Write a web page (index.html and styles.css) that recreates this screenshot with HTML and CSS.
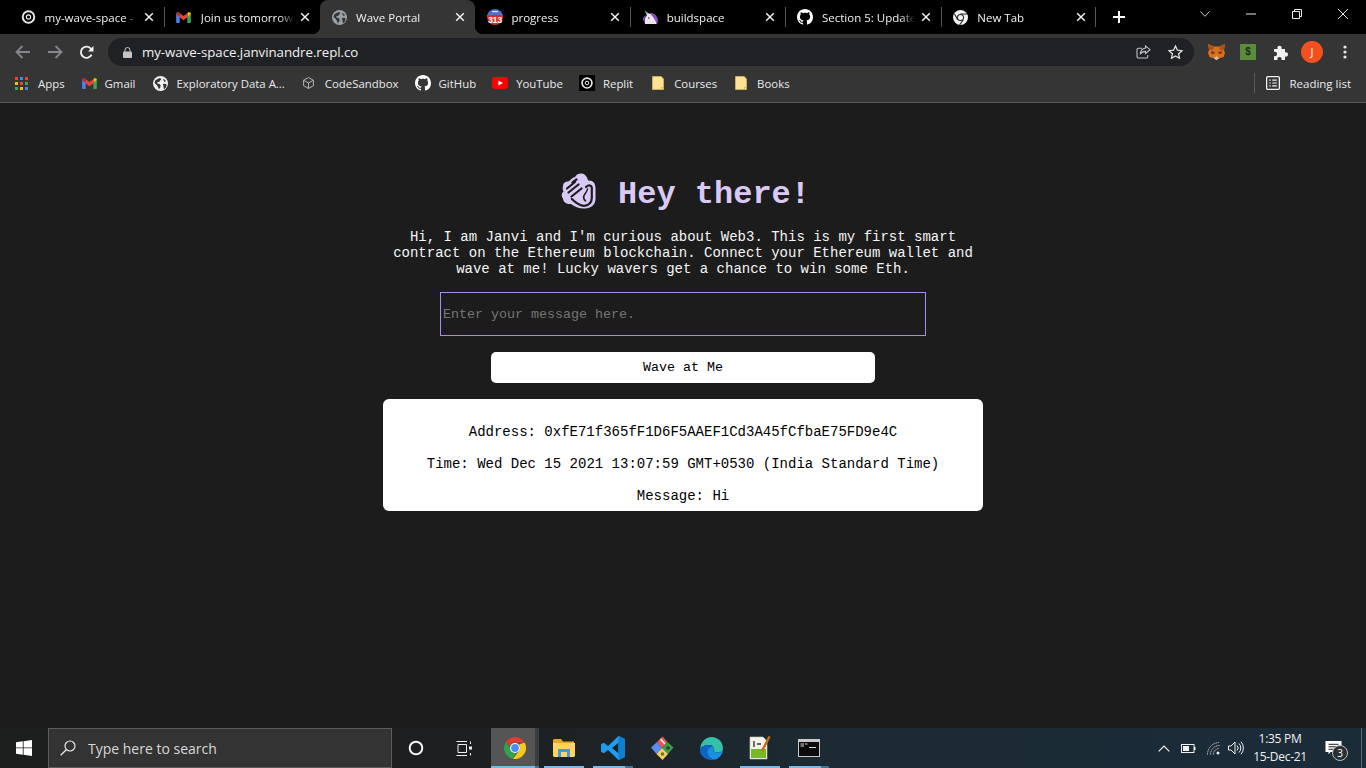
FILE: index.html
```html
<!DOCTYPE html>
<html lang="en">
<head>
<meta charset="utf-8">
<title>Wave Portal</title>
<link rel="stylesheet" href="styles.css">
</head>
<body>
<svg class="defs" width="0" height="0" aria-hidden="true">
  <defs>
    <symbol id="i-replit" viewBox="0 0 16 16">
      <circle cx="8" cy="8" r="6.6" fill="none" stroke="#e8e8e8" stroke-width="2.2"/>
      <path d="M4.6 8.6A3.6 3.6 0 0 1 11 6" fill="none" stroke="#111" stroke-width="1.3"/>
      <circle cx="8" cy="8" r="2.4" fill="none" stroke="#e8e8e8" stroke-width="1.3"/>
      <path d="M12 9.5A4.5 4.5 0 0 1 6 12.4" fill="none" stroke="#111" stroke-width="1"/>
    </symbol>
    <symbol id="i-gmail" viewBox="0 0 16 12">
      <path d="M1 12V2.5L8 7.6 15 2.5V12h-2.6V5.8L8 9 3.6 5.8V12z" fill="#e8453c"/>
      <path d="M0 2.2C0 .6 1.7-.4 3 .5L3.6 1V12H1.1C.5 12 0 11.5 0 10.9z" fill="#4285f4"/>
      <path d="M16 2.2C16 .6 14.3-.4 13 .5L12.4 1V12h2.5c.6 0 1.1-.5 1.1-1.1z" fill="#34a853"/>
      <path d="M12.4 1 13 .5C14.3-.4 16 .6 16 2.2L12.4 5z" fill="#fbbc04"/>
      <path d="M3.6 1 8 4.3 12.4 1v4L8 8.2 3.6 5z" fill="#ea4335"/>
      <path d="M0 2.2C0 .6 1.7-.4 3 .5L3.6 1V5L0 2.4z" fill="#c5221f"/>
    </symbol>
    <symbol id="i-globe" viewBox="0 0 16 16">
      <circle cx="8" cy="8" r="8" fill="currentColor"/>
      <path d="M2.5 4.5 5 3.2 7.4 2 9 3.2 7.6 4.8 6.6 6.3 4.6 6.4 5 8.3 7 8.6 8.2 10 7.6 12.4 6.2 14.2 5.2 11.5 3.8 9.4 1.6 7.4zM10.6 8.6l2.6-.4 1.4 1-1 3.4-2 1.6-.4-2.8zM10.5 3l2.5 1.2.8 1.6-1.8.2z" fill="var(--globe-land, #333)"/>
    </symbol>
    <symbol id="i-github" viewBox="0 0 16 16">
      <path fill="#fff" d="M8 0C3.58 0 0 3.58 0 8c0 3.54 2.29 6.53 5.47 7.59.4.07.55-.17.55-.38 0-.19-.01-.82-.01-1.49-2.01.37-2.53-.49-2.69-.94-.09-.23-.48-.94-.82-1.13-.28-.15-.68-.52-.01-.53.63-.01 1.08.58 1.23.82.72 1.21 1.87.87 2.33.66.07-.52.28-.87.51-1.07-1.78-.2-3.64-.89-3.64-3.95 0-.87.31-1.59.82-2.15-.08-.2-.36-1.02.08-2.12 0 0 .67-.21 2.2.82.64-.18 1.32-.27 2-.27.68 0 1.36.09 2 .27 1.53-1.04 2.2-.82 2.2-.82.44 1.1.16 1.92.08 2.12.51.56.82 1.27.82 2.15 0 3.07-1.87 3.75-3.65 3.95.29.25.54.73.54 1.48 0 1.07-.01 1.93-.01 2.2 0 .21.15.46.55.38A8.013 8.013 0 0016 8c0-4.42-3.58-8-8-8z"/>
    </symbol>
    <symbol id="i-x" viewBox="0 0 10 10">
      <path d="M1.2 1.2 8.8 8.8M8.8 1.2 1.2 8.8" stroke="#f1f1f1" stroke-width="1.5" fill="none"/>
    </symbol>
    <symbol id="i-folder" viewBox="0 0 12 14">
      <path d="M.5.5H9.2L11.5 3V13.5H.5z" fill="#fde293"/>
      <path d="M9 13.5V11h2.5z" fill="#e0b93f"/>
      <path d="M.5.5H9.2L11.5 3V13.5H.5z" fill="none" stroke="#e8c760" stroke-width=".6"/>
    </symbol>
    <symbol id="i-chrome" viewBox="0 0 16 16">
      <circle cx="8" cy="8" r="8" fill="#f1f1f1"/>
      <circle cx="8" cy="8" r="3.8" fill="#222"/>
      <circle cx="8" cy="8" r="2.7" fill="#f1f1f1"/>
      <path d="M8 4.2H15.2M5 10.5 1.6 4.2M10.8 10.5 7 16" stroke="#222" stroke-width="1.1" fill="none"/>
    </symbol>
  </defs>
</svg>

<header class="browser">
  <div class="tabstrip">
    <div class="tab">
      <svg class="tab-ico" width="14" height="14"><use href="#i-replit"/></svg>
      <span class="tab-title">my-wave-space - </span>
      <svg class="tab-x" width="10" height="10"><use href="#i-x"/></svg>
    </div>
    <div class="tab sep">
      <svg class="tab-ico" width="15" height="11"><use href="#i-gmail"/></svg>
      <span class="tab-title">Join us tomorrow</span>
      <svg class="tab-x" width="10" height="10"><use href="#i-x"/></svg>
    </div>
    <div class="tab active">
      <svg class="tab-ico globe-tab" width="15" height="15"><use href="#i-globe"/></svg>
      <span class="tab-title">Wave Portal</span>
      <svg class="tab-x" width="10" height="10"><use href="#i-x"/></svg>
    </div>
    <div class="tab">
      <svg class="tab-ico ico-16" width="16" height="16" viewBox="0 0 16 16">
        <path d="M0 8a8 8 0 0 1 16 0z" fill="#4a6fd8"/>
        <path d="M0 6h16V8a8 8 0 0 1-16 0z" fill="#e02b24"/>
        <rect x="5" y="2" width="6" height="1.200" fill="#dfe6f8"/>
      </svg>
      <span class="badge-num">313</span>
      <span class="tab-title">progress</span>
      <svg class="tab-x" width="10" height="10"><use href="#i-x"/></svg>
    </div>
    <div class="tab sep">
      <svg class="tab-ico ico-16" width="16" height="15" viewBox="0 0 16 15">
        <path d="M3 14C2 10 3 7 5 5.500L3 .8 7.200 3.800C10.500 3 14 4.500 15 8.500 15.800 11.500 15 13.500 14.500 14z" fill="#f0e2f2"/>
        <path d="M8 3.500C10.500 2.900 14.500 5 15.500 8.500 16.200 11 15.600 13 14.800 14.500 13.800 11 12 7.500 8 3.500zM5 5.200C3 6.500 2 9 2.400 12L1 10C.5 8 2 5.500 5 5.200z" fill="#8a4bc0"/>
        <path d="M3 .8 5.800 3.400 4.600 4.600z" fill="#3fb56f"/>
        <circle cx="6.800" cy="8" r=".8" fill="#333"/>
      </svg>
      <span class="tab-title">buildspace</span>
      <svg class="tab-x" width="10" height="10"><use href="#i-x"/></svg>
    </div>
    <div class="tab sep">
      <svg class="tab-ico ico-16" width="16" height="16"><use href="#i-github"/></svg>
      <span class="tab-title">Section 5: Update</span>
      <svg class="tab-x" width="10" height="10"><use href="#i-x"/></svg>
    </div>
    <div class="tab sep sep-end">
      <svg class="tab-ico" width="15" height="15"><use href="#i-chrome"/></svg>
      <span class="tab-title">New Tab</span>
      <svg class="tab-x" width="10" height="10"><use href="#i-x"/></svg>
    </div>
    <svg class="newtab" width="12" height="12" viewBox="0 0 12 12"><path d="M6 0V12M0 6H12" stroke="#fff" stroke-width="2"/></svg>
    <div class="winctl">
      <svg class="win-btn" width="10" height="6" viewBox="0 0 10 6"><path d="M.5 .5 5 5.300 9.500 .5" stroke="#c8c8c8" fill="none"/></svg>
      <svg class="win-btn" width="10" height="2" viewBox="0 0 10 2"><path d="M0 1H10" stroke="#e8e8e8"/></svg>
      <svg class="win-btn" width="10" height="10" viewBox="0 0 10 10"><path d="M.5 2.500H7.500V9.500H.5zM2.500 2.500V.5H9.500V7.500H7.500" stroke="#e8e8e8" fill="none"/></svg>
      <svg class="win-btn" width="10" height="10" viewBox="0 0 10 10"><path d="M0 0 10 10M10 0 0 10" stroke="#e8e8e8"/></svg>
    </div>
  </div>

  <div class="toolbar">
    <svg class="nav" width="16" height="14" viewBox="0 0 16 14"><path d="M15 7H2M7.500 1 1.500 7l6 6" stroke="#85878a" stroke-width="1.800" fill="none"/></svg>
    <svg class="nav" width="16" height="14" viewBox="0 0 16 14"><path d="M1 7H14M8.500 1l6 6-6 6" stroke="#85878a" stroke-width="1.800" fill="none"/></svg>
    <svg class="nav" width="15" height="15" viewBox="0 0 15 15"><path d="M12.600 9.600A5.600 5.600 0 1 1 11.600 3.400L13 5" stroke="#f1f1f1" stroke-width="1.900" fill="none"/><path d="M14.500 1V6.600H9z" fill="#f1f1f1"/></svg>
    <div class="omnibox">
      <svg class="lock" width="9" height="11" viewBox="0 0 9 11"><path d="M2 5V3a2.500 2.500 0 0 1 5 0v2" stroke="#c4c4c4" fill="none"/><rect y="4.400" width="9" height="6.600" rx="1" fill="#c4c4c4"/></svg>
      <span class="url">my-wave-space.janvinandre.repl.co</span>
      <svg class="omni-ico" width="15" height="14" viewBox="0 0 15 14"><path d="M6 3.200H2.400A1.400 1.400 0 0 0 1 4.600v7A1.400 1.400 0 0 0 2.400 13h8A1.400 1.400 0 0 0 11.800 11.600V10" stroke="#bdc1c6" stroke-width="1.100" fill="none"/><path d="M9.500.9 14 4.700 9.500 8.500V6.400C7 6.400 5.300 7.400 4.200 9.300 4.500 6 6.400 3.500 9.500 3z" stroke="#bdc1c6" stroke-width="1.100" fill="none"/></svg>
      <svg class="omni-ico star" width="15" height="14" viewBox="0 0 15 14"><path d="M7.500 1 9.400 5.200 14 5.700 10.600 8.800 11.500 13.300 7.500 11 3.500 13.300 4.400 8.800 1 5.700 5.600 5.200z" stroke="#e0e0e0" stroke-width="1.300" fill="none"/></svg>
    </div>
    <svg class="ext fox" width="17" height="16" viewBox="0 0 17 16">
      <path d="M0 0 6 2.500H11L17 0 16 6 17 9 15.500 13 11 14.500 8.500 16 6 14.500 1.500 13 0 9 1 6z" fill="#d9701f"/>
      <path d="M3 7 7 8 6 10 3.500 10zM14 7 10 8 11 10 13.500 10z" fill="#763d16"/>
      <path d="M0 0 6 2.500 5 6 1 6zM17 0 11 2.500 12 6 16 6z" fill="#a8531a"/>
      <path d="M6 14.500 8.500 12 11 14.500 8.500 16z" fill="#d7c1b3"/>
      <path d="M7 10.500H10L8.500 12z" fill="#f6851b"/>
    </svg>
    <div class="ext dollar">$</div>
    <svg class="ext puzzle" width="15" height="15" viewBox="0 0 15 15"><path d="M1 4H4.500C4 2 5 .8 6.500.8S9 2 8.500 4H12V7.500C14 7 15 8 15 9.500S14 12 12 11.500V15H8.500C9 13 8 12 6.500 12S4 13 4.500 15H1V11C3 11.500 4 10.500 4 9S3 6.500 1 7z" fill="#f1f1f1"/></svg>
    <div class="avatar">J</div>
    <svg class="kebab" width="4" height="14" viewBox="0 0 4 14"><circle cx="2" cy="2" r="1.600" fill="#e8e8e8"/><circle cx="2" cy="7" r="1.600" fill="#e8e8e8"/><circle cx="2" cy="12" r="1.600" fill="#e8e8e8"/></svg>
  </div>

  <nav class="bookmarks">
    <span class="bm bm-apps">
      <svg width="13" height="13" viewBox="0 0 13 13">
        <rect width="3" height="3" fill="#ea4335"/><rect x="5" width="3" height="3" fill="#4285f4"/><rect x="10" width="3" height="3" fill="#ea4335"/>
        <rect y="5" width="3" height="3" fill="#fbbc04"/><rect x="5" y="5" width="3" height="3" fill="#ea4335"/><rect x="10" y="5" width="3" height="3" fill="#34a853"/>
        <rect y="10" width="3" height="3" fill="#34a853"/><rect x="5" y="10" width="3" height="3" fill="#fbbc04"/><rect x="10" y="10" width="3" height="3" fill="#4285f4"/>
      </svg>Apps</span>
    <span class="bm"><svg width="15" height="11"><use href="#i-gmail"/></svg>Gmail</span>
    <span class="bm globe-bm"><svg width="15" height="15"><use href="#i-globe"/></svg>Exploratory Data A...</span>
    <span class="bm bm-csb"><svg width="11" height="12" viewBox="0 0 10 11"><path d="M5 .5 9.500 3V8L5 10.500.5 8V3zM.5 3 5 5.500 9.500 3M5 5.500V10.500" stroke="#b9b9b9" fill="none" stroke-width=".9"/></svg>CodeSandbox</span>
    <span class="bm"><svg width="16" height="16"><use href="#i-github"/></svg>GitHub</span>
    <span class="bm"><svg width="16" height="12" viewBox="0 0 16 12"><rect width="16" height="12" rx="3" fill="#f00"/><path d="M6.400 3.400 11 6 6.400 8.600z" fill="#fff"/></svg>YouTube</span>
    <span class="bm bm-replit"><svg width="16" height="16" viewBox="0 0 16 16"><rect width="16" height="16" fill="#000"/><use href="#i-replit" x="2" y="2" width="12" height="12"/></svg>Replit</span>
    <span class="bm folder"><svg width="12" height="14"><use href="#i-folder"/></svg>Courses</span>
    <span class="bm folder"><svg width="12" height="14"><use href="#i-folder"/></svg>Books</span>
    <span class="reading">
      <svg width="14" height="14" viewBox="0 0 13 13"><rect x=".6" y=".6" width="11.800" height="11.800" rx="1" stroke="#f1f1f1" stroke-width="1.200" fill="none"/><path d="M3 3.800H4.400M5.800 3.800H10M3 6.500H4.400M5.800 6.500H10M3 9.200H4.400M5.800 9.200H10" stroke="#f1f1f1" stroke-width="1.100"/></svg>
      Reading list</span>
  </nav>
</header>

<main class="page">
  <section class="portal">
    <h1 class="title">
      <svg class="wave" width="36" height="37" viewBox="0 0 36 37">
        <path d="M3 14C3 11 5 9.500 8 9.500 10 9 12 5.500 15 5 17 1 23 .5 25.500 3.500 27 5 27.500 6.500 28 8.500 33 8 35.500 11 35.500 16V27C35.500 33 30 37 24 36.500 19 36.500 14 34.500 11 32 7 32.500 3 30 3 26.500 1 24 1.500 21 3.500 19.500 2.500 17.500 2.500 15.500 3 14Z" fill="#d9c9f5"/>
        <path d="M7 16.500 15 10M8.500 20.500 18.500 12.500M11.500 24.500 21.500 16.500M12.500 10.500 16.500 7.500" stroke="#1c1c1c" stroke-width="2.200" stroke-linecap="round" fill="none"/>
        <path d="M26 15C29 12.500 31.800 13 31.800 16.500V26C31.800 30.500 28.500 33.800 24 33.800 19.500 33.800 15.500 30.500 11.800 27" stroke="#1c1c1c" stroke-width="2.200" fill="none" stroke-linecap="round"/>
        <path d="M27.500 17C27 20 25 21.500 24 23.500 23.200 25.500 23.800 27.500 25.500 29" stroke="#1c1c1c" stroke-width="1.500" fill="none" stroke-linecap="round"/>
      </svg>
      <span>Hey there!</span>
    </h1>
    <p class="intro">Hi, I am Janvi and I'm curious about Web3. This is my first smart contract on the Ethereum blockchain. Connect your Ethereum wallet and wave at me! Lucky wavers get a chance to win some Eth.</p>
    <input class="msg" type="text" placeholder="Enter your message here.">
    <button class="wave-btn" type="button">Wave at Me</button>
    <article class="card">
      <p>Address: 0xfE71f365fF1D6F5AAEF1Cd3A45fCfbaE75FD9e4C</p>
      <p>Time: Wed Dec 15 2021 13:07:59 GMT+0530 (India Standard Time)</p>
      <p>Message: Hi</p>
    </article>
  </section>
</main>

<footer class="taskbar">
  <svg class="start" width="16" height="16" viewBox="0 0 16 16"><path d="M0 2.300 6.800 1.300V7.500H0zM7.600 1.200 16 0V7.500H7.600zM0 8.300H6.800V14.700L0 13.700zM7.600 8.300H16V16L7.600 14.800z" fill="#fff"/></svg>
  <div class="search">
    <svg width="16" height="16" viewBox="0 0 16 16"><circle cx="10" cy="6" r="5" stroke="#e8e8e8" stroke-width="1.200" fill="none"/><path d="M6.500 9.500 .7 15.300" stroke="#e8e8e8" stroke-width="1.300"/></svg>
    <span>Type here to search</span>
  </div>
  <svg class="cortana" width="16" height="16" viewBox="0 0 16 16"><circle cx="8" cy="8" r="6.300" stroke="#f4f4f4" stroke-width="2" fill="none"/></svg>
  <svg class="taskview" width="16" height="15" viewBox="0 0 16 15"><path d="M.5 .5H11M.5 14.500H11M2 3.500H10.500V11.500H2zM14.500 .5V3M14.500 12V14.500" stroke="#f0f0f0" fill="none"/><rect x="13" y="5.500" width="3" height="3" fill="#f0f0f0"/></svg>
  <div class="apps-row">
    <div class="app on active-app split">
      <svg width="22" height="22" viewBox="0 0 22 22">
        <path d="M11 0A11 11 0 0 1 20.500 5.500H11A5.500 5.500 0 0 0 5.800 9.300L2.200 4.500A11 11 0 0 1 11 0z" fill="#e33b2e"/>
        <path d="M2.200 4.500 7.500 13.800A5.500 5.500 0 0 0 12 16.400L8.500 21.700A11 11 0 0 1 2.200 4.500z" fill="#2ea44f"/>
        <path d="M20.500 5.500A11 11 0 0 1 9 21.800L15 14A5.500 5.500 0 0 0 15 7.500z" fill="#f9c916"/>
        <circle cx="11" cy="11" r="5" fill="#fff"/><circle cx="11" cy="11" r="3.900" fill="#4c8bf5"/>
      </svg>
    </div>
    <div class="app on">
      <svg width="22" height="18" viewBox="0 0 22 18">
        <path d="M0 1.500C0 .7.700 0 1.500 0H8L10 2.500H21V6H0z" fill="#e9a825"/>
        <path d="M0 4H22V16.500C22 17.300 21.300 18 20.500 18H1.500C.7 18 0 17.300 0 16.500z" fill="#ffd560"/>
        <path d="M5 10H17V18H14V13H8V18H5z" fill="#3f9ae5"/>
      </svg>
    </div>
    <div class="app on split">
      <svg width="24" height="24" viewBox="0 0 24 24">
        <path d="M17.500 0 24 3V21L17.500 24 7 14 2.800 17.300 0 15.800V8.200L2.800 6.700 7 10zM17.500 6.800 11 12l6.500 5.200z" fill="#1f9cf0"/>
        <path d="M17.500 0 24 3V21L17.500 24z" fill="#0f7fd0"/>
      </svg>
    </div>
    <div class="app">
      <svg width="24" height="24" viewBox="0 0 24 24">
        <path d="M1 11.500 7 6 12 12 6.500 18z" fill="#5b8def"/>
        <path d="M7 6 12.500 .5 17 5.500 12 12z" fill="#e8585a"/>
        <path d="M12 12 17 5.500 23.500 11.500 18 18z" fill="#3e9a4a"/>
        <path d="M6.500 18 12 12 18 18 12.500 24z" fill="#f0d264"/>
        <circle cx="18" cy="12" r="1.800" fill="#23452a"/><circle cx="12.500" cy="18" r="1.800" fill="#7a6a2a"/><path d="M10.500 3 15 8" stroke="#fff" stroke-width="1.400"/>
      </svg>
    </div>
    <div class="app">
      <svg width="23" height="23" viewBox="0 0 23 23">
        <path d="M11.500 0C18 0 23 5 23 11.500 23 14 21 15.500 18 15.500 14.500 15.500 13 14 13.500 12.500 14 10 12 8 9 8 4.500 8 .5 10 0 13 .5 5 5.500 0 11.500 0z" fill="#35c1a9"/>
        <path d="M0 13C.5 10 4.500 8 9 8 11 8 12.500 9 13 10 8 9.500 6 14 8 18 9.500 21 12.500 23 15.500 22.500 13.500 23.300 11.500 23 11.500 23 5 23 0 18.500 0 13z" fill="#0f64c8"/>
        <path d="M13 10C13.500 11 13.500 12 13.500 12.500 13 14 14.500 15.500 18 15.500 21 15.500 23 14 23 11.500 23.500 16 20 21 15.500 22.500 12.500 23 9.500 21 8 18 6 14 8 9.500 13 10z" fill="#1b8fe0"/>
      </svg>
    </div>
    <div class="app on">
      <svg width="22" height="24" viewBox="0 0 22 24">
        <path d="M1 1H14L18 5V23H1z" fill="#f2f4e6" stroke="#c7c9b8" stroke-width=".6"/>
        <path d="M2 13H17V22H2z" fill="#76b82a"/>
        <path d="M5 5V11M8 8H12" stroke="#333" stroke-width="1.400"/>
        <path d="M20.500 .5 13 15" stroke="#c96a1a" stroke-width="2.400"/>
      </svg>
    </div>
    <div class="app on split narrow">
      <svg width="22" height="18" viewBox="0 0 22 18">
        <rect width="22" height="18" fill="#c9c9c9"/>
        <rect x="1" y="3" width="20" height="14" fill="#0c0c0c"/>
        <path d="M2.500 5H6M7 5H9.500M2.500 7H6M11 8.500H18" stroke="#d8d8d8" stroke-width="1"/>
      </svg>
    </div>
  </div>
  <div class="tray">
    <svg class="t-caret" width="12" height="7" viewBox="0 0 12 7"><path d="M.7 6.300 6 1 11.300 6.300" stroke="#f0f0f0" stroke-width="1.200" fill="none"/></svg>
    <svg class="t-bat" width="15" height="9" viewBox="0 0 15 9"><rect x=".5" y=".5" width="12.500" height="8" stroke="#f0f0f0" fill="none"/><rect x="2" y="2" width="6" height="5" fill="#f0f0f0"/><rect x="13" y="3" width="1.500" height="3" fill="#f0f0f0"/></svg>
    <svg class="t-wifi" width="13" height="13" viewBox="0 0 13 13"><path d="M.5 12.500A12 12 0 0 1 12.500 .5M3.500 12.500A9 9 0 0 1 12.500 3.500M6.300 12.500A6.200 6.200 0 0 1 12 6.500" stroke="#c0c0c0" fill="none" stroke-dasharray="1.500 .6"/><circle cx="11" cy="11" r="1.500" fill="#f0f0f0"/></svg>
    <svg class="t-vol" width="16" height="14" viewBox="0 0 16 14"><path d="M.5 5H3L7 1V13L3 9H.5z" stroke="#f0f0f0" fill="none"/><path d="M9 4.500A3.500 3.500 0 0 1 9 9.500M11 2.500A6.500 6.500 0 0 1 11 11.500M13 .7A9.500 9.500 0 0 1 13 13.300" stroke="#f0f0f0" fill="none"/></svg>
    <div class="clock"><span>1:35 PM</span><span>15-Dec-21</span></div>
    <div class="notify">
      <svg width="17" height="14" viewBox="0 0 16 14"><path d="M0 0H16V11H5L3 13.500V11H0z" fill="#fff"/><path d="M3 3.300H13M3 5.800H13M3 8.300H10" stroke="#222" stroke-width="1"/></svg>
      <span class="count">3</span>
    </div>
  </div>
</footer>
</body>
</html>
```

FILE: styles.css
```css
* { box-sizing: border-box; }
html, body { margin: 0; height: 100%; }
body {
  width: 1366px;
  height: 768px;
  overflow: hidden;
  display: flex;
  flex-direction: column;
  background: #1c1c1c;
  font-family: "Open Sans", "Noto Sans", sans-serif;
  color: #f1f1f1;
}
.defs { position: absolute; }
svg { display: block; flex: none; }

/* Chrome */
.browser { flex: none; }
.tabstrip {
  height: 34px;
  background: #000;
  display: flex;
  align-items: center;
  padding-left: 9px;
}
.tab {
  position: relative;
  width: 155.3px;
  height: 34px;
  flex: none;
  display: flex;
  align-items: center;
  padding: 0 10px 0 12px;
  font-size: 11.5px;
  color: #f1f1f1;
}
.tab.sep::before, .tab.sep-end::after {
  content: "";
  position: absolute;
  top: 7px;
  height: 20px;
  width: 1px;
  background: #555;
  left: 0;
}
.tab.sep-end::after { left: auto; right: 0; }
.tab.active {
  background: #353535;
  border-radius: 8px 8px 0 0;
  --globe-land: #353535;
}
.tab.active::before, .tab.active::after {
  content: "";
  position: absolute;
  bottom: 0;
  width: 8px;
  height: 8px;
}
.tab.active::before { left: -8px; background: radial-gradient(circle at 0 0, transparent 8px, #353535 8.5px); }
.tab.active::after { right: -8px; background: radial-gradient(circle at 100% 0, transparent 8px, #353535 8.5px); }
.tab-ico { margin-right: 9.5px; width: 15px; }
.ico-16 { width: 16px; margin-right: 8.5px; }
.tab:first-child .tab-ico { margin-right: 8.5px; }
.globe-tab { color: #9aa0a6; }
.tab-title {
  flex: 1;
  min-width: 0;
  white-space: nowrap;
  overflow: hidden;
  -webkit-mask-image: linear-gradient(90deg, #000 85%, transparent);
  mask-image: linear-gradient(90deg, #000 85%, transparent);
}
.tab-x { flex: none; margin-left: 6px; }
.badge-num {
  position: absolute;
  left: 13px;
  top: 16px;
  width: 14px;
  text-align: center;
  font: bold 9px/9px "Liberation Sans", sans-serif;
  letter-spacing: -.3px;
  color: #fff;
}
.newtab { margin-left: 17px; }
.winctl { margin-left: auto; display: flex; align-items: center; height: 28px; margin-top: -7px; padding-right: 18px; }
.win-btn { margin-left: 36px; }
.winctl .win-btn:first-child { margin-left: 0; }

.toolbar {
  height: 32px;
  background: #353535;
  display: flex;
  align-items: center;
  padding: 4px 0 0 15px;
}
.nav { margin-right: 16px; }
.toolbar .nav:nth-child(3) { margin-right: 14px; }
.omnibox {
  width: 1086px;
  height: 28px;
  border-radius: 14px;
  background: #202124;
  display: flex;
  align-items: center;
  padding: 0 11px 0 15px;
  font-size: 13.3px;
}
.lock { margin-right: 10px; }
.url { flex: 1; color: #f1f1f1; letter-spacing: -.05px; }
.omni-ico { margin-left: 17px; }
.fox { margin-left: 14px; }
.dollar {
  width: 16px;
  height: 16px;
  margin-left: 15px;
  background: #5b8c3e;
  color: #1d2b14;
  font: bold 10px/16px "Liberation Sans", sans-serif;
  text-align: center;
}
.puzzle { margin-left: 17px; }
.avatar {
  width: 22px;
  height: 22px;
  margin-left: 13px;
  border-radius: 50%;
  background: #f4511e;
  color: #fff;
  font-size: 11px;
  line-height: 22px;
  text-align: center;
}
.kebab { margin-left: 20px; }

.bookmarks {
  height: 37px;
  background: #353535;
  border-bottom: 1px solid #5a5a5a;
  display: flex;
  align-items: center;
  padding: 0 0 2px 15px;
  font-size: 11.4px;
  color: #e8eaed;
}
.bm {
  display: flex;
  align-items: center;
  gap: 8px;
  margin-right: 16px;
  white-space: nowrap;
}
.bm-apps { gap: 10px; margin-right: 17px; }
.bm:nth-child(2) { margin-right: 17px; }
.globe-bm { gap: 9px; margin-right: 18px; --globe-land: #353535; }
.globe-bm svg { color: #f1f1f1; }
.bm-csb { gap: 11px; }
.bm-replit { margin-right: 19px; }
.folder { margin-right: 18px; gap: 10px; }
.reading {
  margin-left: auto;
  display: flex;
  align-items: center;
  gap: 9px;
  height: 20px;
  padding: 0 15px 0 11px;
  border-left: 1px solid #5a5a5a;
  white-space: nowrap;
  font-size: 11.5px;
}

/* Page */
.page { flex: 1; min-height: 0; padding-top: 70px; }
.portal {
  width: 600px;
  margin: 0 auto;
  display: flex;
  flex-direction: column;
  align-items: center;
  font-family: "Liberation Mono", "Courier New", monospace;
  font-size: 14px;
}
.title {
  margin: 0;
  height: 40px;
  display: flex;
  align-items: center;
  gap: 22px;
  padding-left: 4px;
  font-size: 32px;
  font-weight: 700;
  line-height: 40px;
  color: #d9c9f5;
}
.title span { padding-top: 4px; }
.wave { margin-top: -6px; }
.intro {
  margin: 16px 0 0;
  width: 600px;
  padding: 0 9px;
  text-align: center;
  line-height: 16px;
  color: #f5f5f5;
}
.msg {
  margin-top: 15px;
  width: 486px;
  height: 44px;
  background: transparent;
  border: 1px solid #a98bf0;
  border-radius: 0;
  padding: 0 2px;
  color: #fff;
  font: 13.333px "Liberation Mono", "Courier New", monospace;
  outline: none;
}
.msg::placeholder { color: #757575; opacity: 1; }
.wave-btn {
  margin-top: 16px;
  width: 384px;
  height: 31px;
  background: #fff;
  border: 0;
  border-radius: 5px;
  padding: 0;
  color: #000;
  font: 13.333px "Liberation Mono", "Courier New", monospace;
}
.card {
  margin-top: 16px;
  width: 600px;
  background: #fff;
  border-radius: 6px;
  color: #000;
  padding: 9px 8px 7px;
  text-align: center;
  line-height: 16px;
}
.card p { margin: 16px 0; }
.card p:last-child { margin-bottom: 0; }

/* Taskbar */
.taskbar {
  flex: none;
  height: 40px;
  position: relative;
  display: flex;
  align-items: center;
  background: linear-gradient(90deg, #1d1f1f 0%, #1d1f20 36%, #1c2a33 60%, #1b2c39 100%);
}
.start { margin-left: 16px; }
.search {
  margin-left: 16px;
  width: 344px;
  height: 40px;
  background: #333;
  border: 1px solid #5c5c5c;
  display: flex;
  align-items: center;
  padding-left: 11px;
  gap: 12px;
  font-size: 14px;
  color: #d8d8d8;
}
.cortana { margin-left: 16px; }
.taskview { margin-left: 32px; }
.apps-row { display: flex; margin-left: 19px; height: 40px; }
.app {
  position: relative;
  width: 49px;
  height: 40px;
  display: flex;
  align-items: center;
  justify-content: center;
  padding-right: 1px;
}
.app.on::after {
  content: "";
  position: absolute;
  left: 4px;
  right: 5px;
  bottom: 0;
  height: 2px;
  background: #76b9ed;
}
.app.split::after { right: 13px; }
.app.split::before {
  content: "";
  position: absolute;
  left: 36px;
  right: 5px;
  bottom: 0;
  height: 2px;
  background: #46728f;
}
.app.active-app { background: linear-gradient(90deg, #555 0 44px, #3d3d3d 44px 48px, transparent 48px); }
.app.active-app::after { left: 0; right: 5px; }
.app.active-app::before { left: 44px; right: 1px; }
.narrow::after { right: 8px; }
.tray {
  margin-left: auto;
  display: flex;
  align-items: center;
  height: 40px;
  position: relative;
  padding-right: 5px;
}
.tray::after {
  content: "";
  position: absolute;
  right: 4px;
  top: 0;
  bottom: 0;
  width: 1px;
  background: #5a6770;
}
.t-caret { margin-right: 11px; }
.t-bat { margin-right: 11px; }
.t-wifi { margin-right: 8px; }
.t-vol { margin-right: 10px; }
.clock {
  width: 52px;
  display: flex;
  flex-direction: column;
  align-items: center;
  font-size: 12px;
  line-height: 18px;
  letter-spacing: -.3px;
  white-space: nowrap;
  color: #f0f0f0;
}
.notify { position: relative; width: 24px; margin: 0 12px 0 19px; height: 24px; padding-top: 5px; }
.count {
  position: absolute;
  left: 7px;
  top: 9px;
  width: 16px;
  height: 16px;
  border-radius: 50%;
  background: #2a2f33;
  border: 1px solid #bbb;
  font-size: 10px;
  line-height: 14px;
  text-align: center;
  color: #fff;
}
```
